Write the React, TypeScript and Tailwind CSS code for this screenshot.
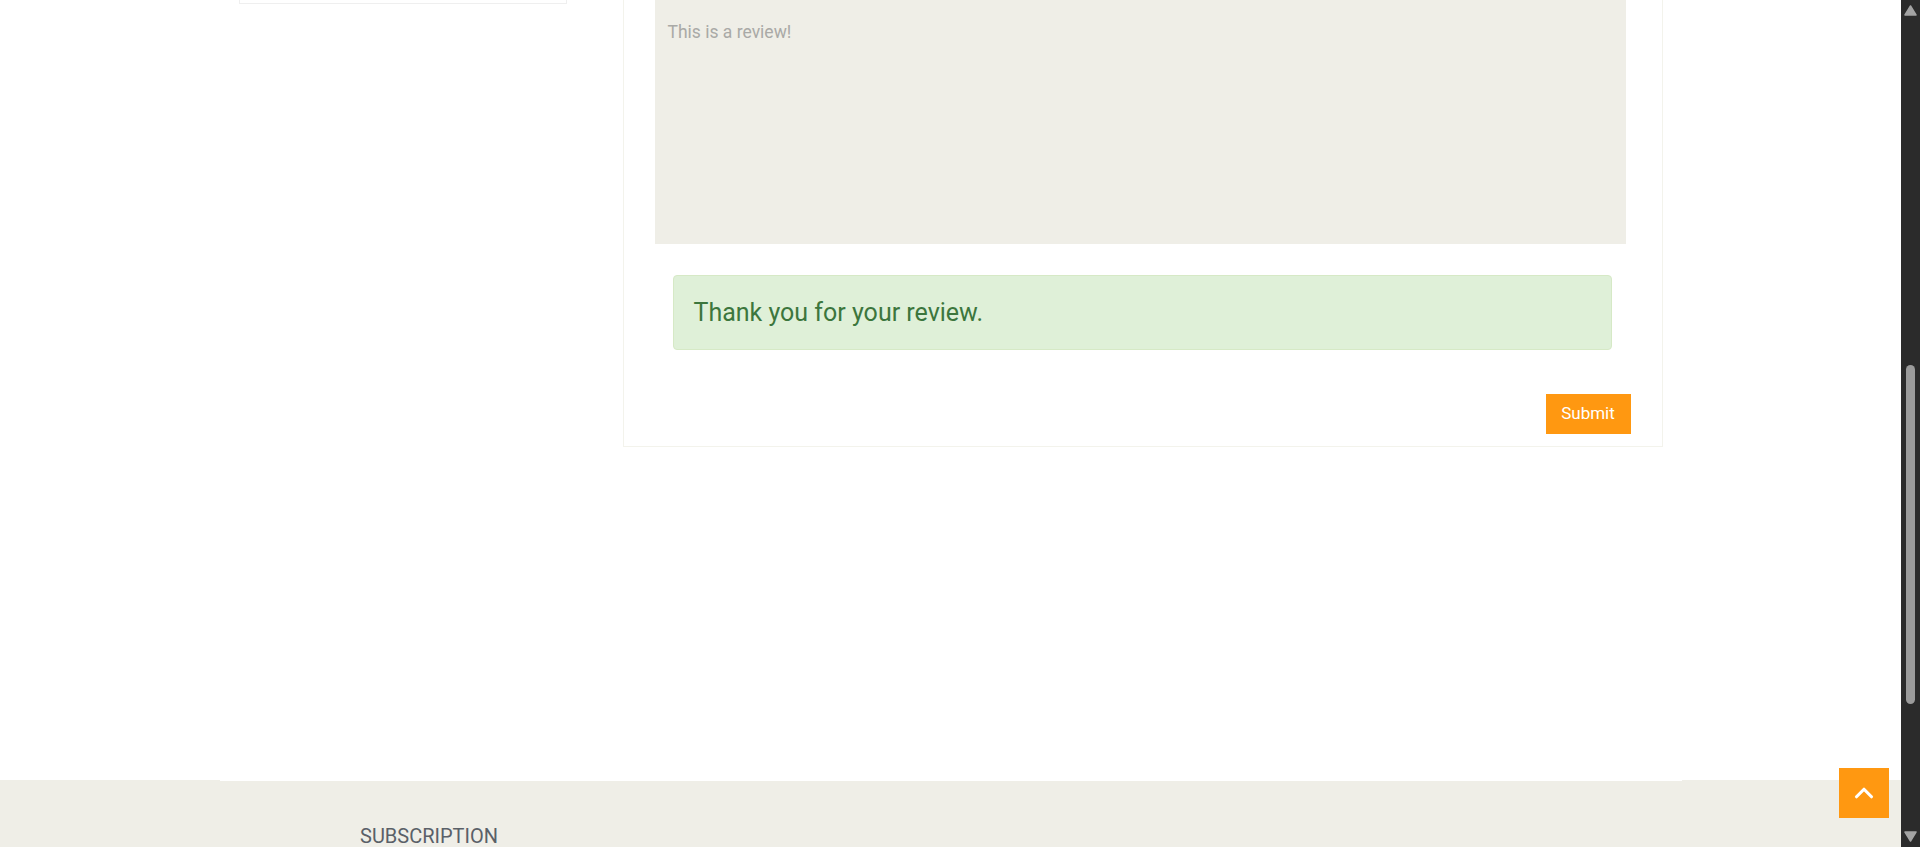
import { ChevronUp } from "lucide-react";

function Scrollbar() {
  return (
    <div className="w-[19px] h-full bg-[#2b2b2b] flex flex-col items-center shrink-0">
      <svg width="19" height="17" viewBox="0 0 19 17" className="shrink-0">
        <path d="M4 15 L9.5 6 L15 15 Z" fill="#a3a3a3" stroke="#a3a3a3" strokeWidth="1.5" strokeLinejoin="round" />
      </svg>
      <div className="flex-1 w-full flex flex-col pt-[348px] pb-[126px] items-center">
        <div className="flex-1 w-[9px] rounded-full bg-[#9b9b9b]" />
      </div>
      <svg width="19" height="17" viewBox="0 0 19 17" className="shrink-0">
        <path d="M4 2 L9.5 11 L15 2 Z" fill="#a3a3a3" stroke="#a3a3a3" strokeWidth="1.5" strokeLinejoin="round" />
      </svg>
    </div>
  );
}

export default function App() {
  return (
    <div className="h-[847px] w-[1920px] overflow-hidden flex bg-white font-['Roboto',sans-serif]">
      <div className="flex-1 flex flex-col relative">
        <div className="h-[780px] shrink-0">
          <div className="w-[1424px] mx-auto flex items-start gap-[56px]">
            <div className="w-[328px] h-[4px] border-x border-b border-[#efefef]" />
            <div className="w-[1040px] h-[447px] border-x border-b border-[#f3f3ec] flex flex-col">
              <div className="ml-[31px] mr-[36px] h-[244px] bg-[#efeee7] pt-[20px] pl-[13px] pr-[12px] text-[17.5px] leading-[24px] text-[#a9a9a6]">
                This is a review!
              </div>
              <div className="mt-[31px] ml-[49px] mr-[50px] h-[75px] bg-[#dff0d8] border border-[#d6e9c6] rounded-[4px] px-[20px] flex items-center text-[25px] text-[#3c763d]">
                Thank you for your review.
              </div>
              <div className="flex justify-end mt-[44px] mr-[31px]">
                <button
                  type="button"
                  className="w-[85px] h-[40px] bg-[#ff9811] text-white text-[17px] flex items-center justify-center"
                >
                  Submit
                </button>
              </div>
            </div>
          </div>
        </div>
        <div className="flex-1 bg-[#efeee7]">
          <div className="ml-[220px] w-[1462px] border-t border-white pt-[43px] pl-[140px] text-[20px] leading-[24px] text-[#5a6068]">
            SUBSCRIPTION
          </div>
        </div>
        <button
          type="button"
          className="absolute left-[1839px] top-[768px] w-[50px] h-[50px] bg-[#ff9811] flex items-center justify-center text-white"
        >
          <ChevronUp size={30} strokeWidth={2.5} />
        </button>
      </div>
      <Scrollbar />
    </div>
  );
}
